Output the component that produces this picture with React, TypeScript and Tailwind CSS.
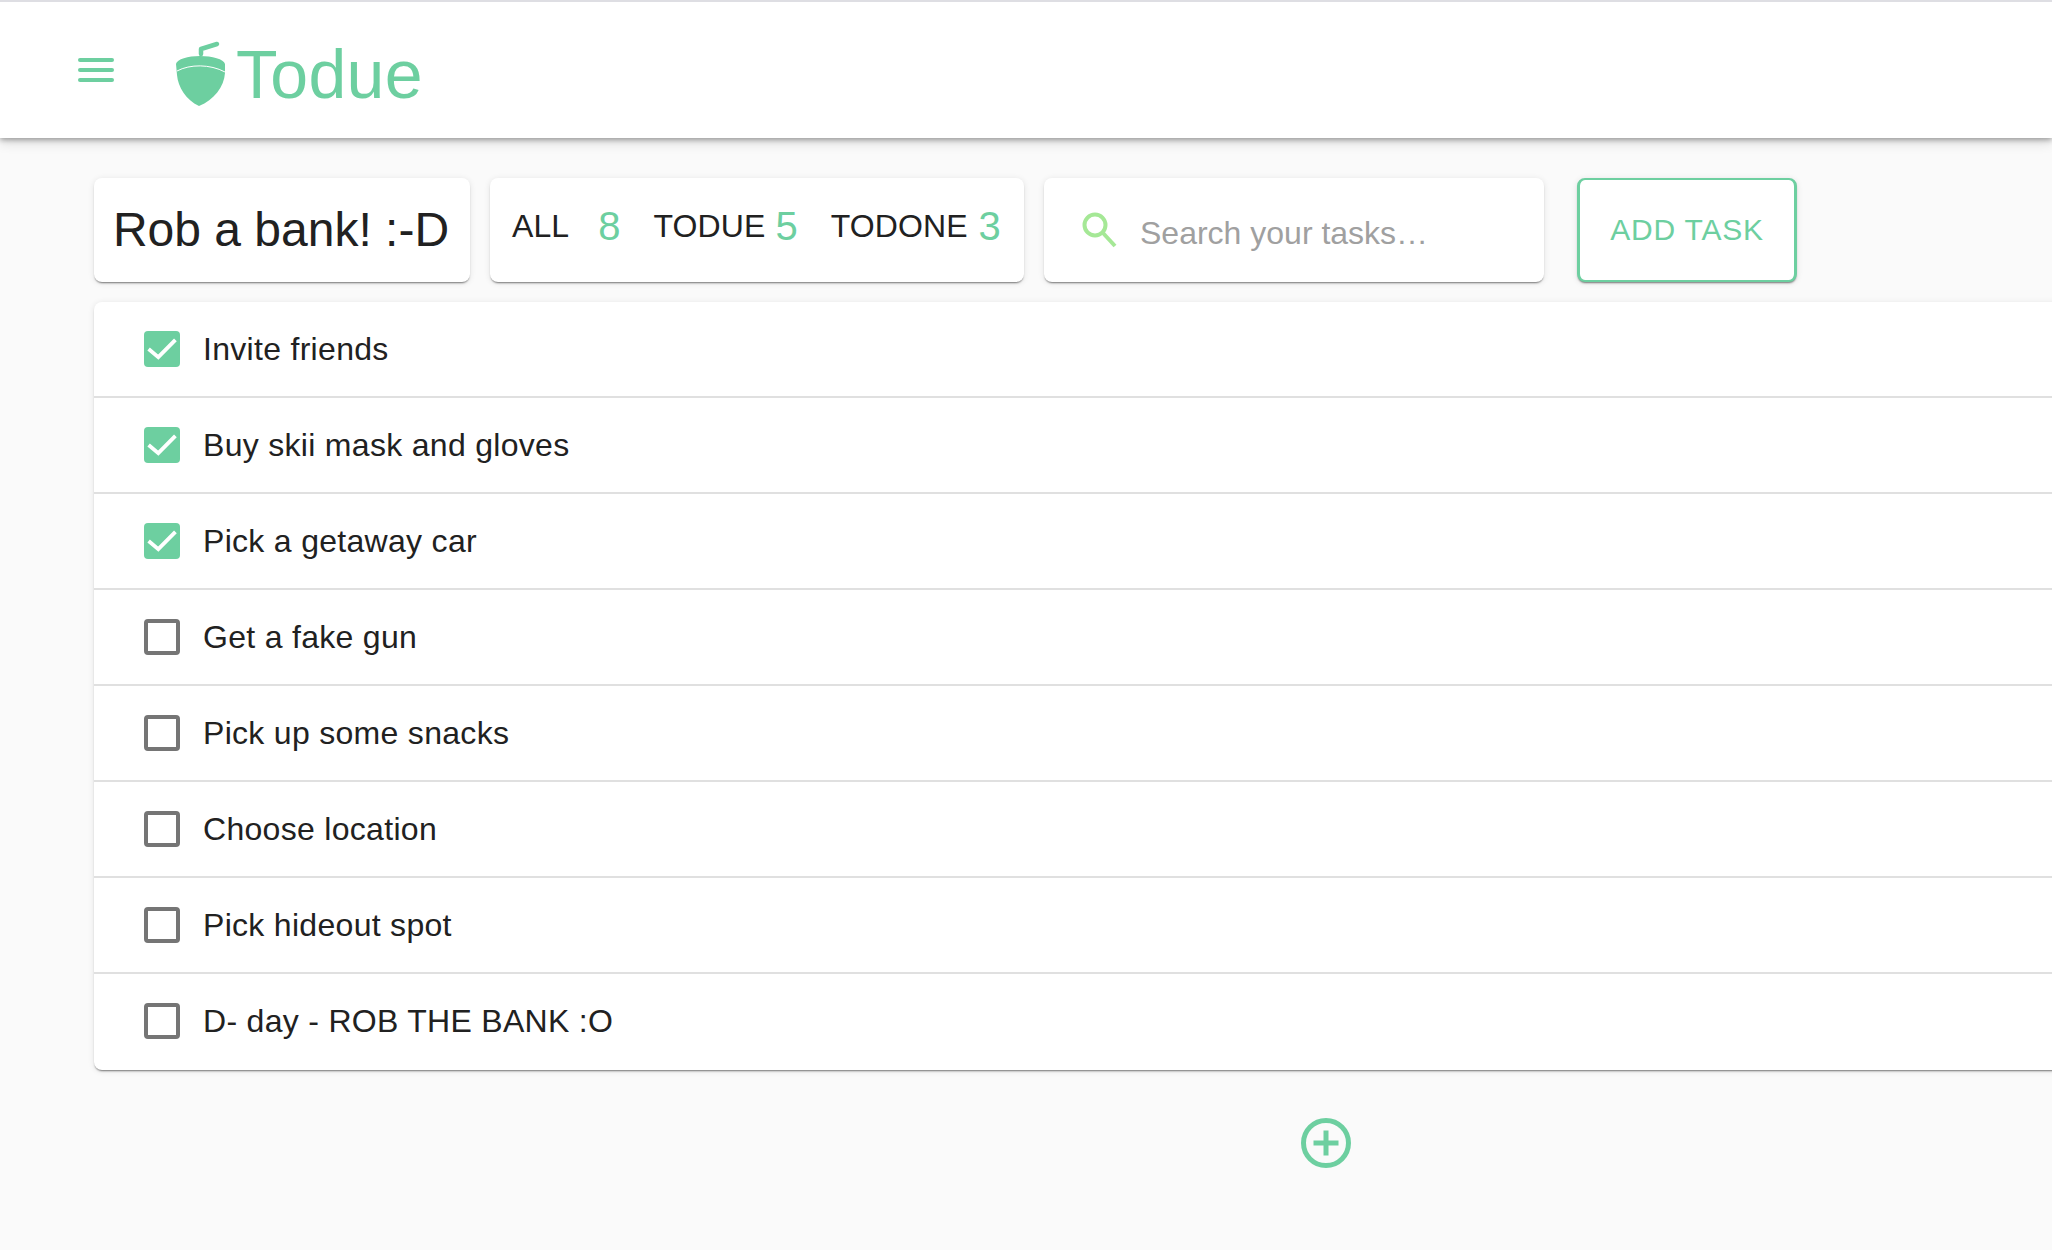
const tasks = [
  { title: 'Invite friends', done: true },
  { title: 'Buy skii mask and gloves', done: true },
  { title: 'Pick a getaway car', done: true },
  { title: 'Get a fake gun', done: false },
  { title: 'Pick up some snacks', done: false },
  { title: 'Choose location', done: false },
  { title: 'Pick hideout spot', done: false },
  { title: 'D- day - ROB THE BANK :O', done: false },
];

const cardShadow =
  'shadow-[0_2px_2px_-1px_rgba(0,0,0,0.5),0_1px_6px_rgba(0,0,0,0.1)]';

function Acorn() {
  return (
    <svg width="52" height="66" viewBox="14 10 52 66" className="shrink-0">
      <path d="M41 23 L41 18 L57 13" fill="none" stroke="#6dcfa0" strokeWidth="4.5" strokeLinejoin="round" strokeLinecap="round" />
      <path
        d="M16 33 C17 28 28 25 40 25 C52 25 64 28 65 33 L65 42 C64 56 54 69 39 75 C26 69 18 56 17 44 Z"
        fill="#6dcfa0"
      />
      <path d="M17 40 C30 33 50 33 65 41" fill="none" stroke="#ffffff" strokeWidth="1" />
    </svg>
  );
}

function Checkbox({ checked }: { checked: boolean }) {
  if (checked) {
    return (
      <span className="flex h-9 w-9 shrink-0 rounded-[4px] bg-[#6dcfa0]">
        <svg width="36" height="36" viewBox="0 0 36 36">
          <path d="M4.6 18 L14.3 26.2 L31.4 8.8" fill="none" stroke="#ffffff" strokeWidth="3.8" />
        </svg>
      </span>
    );
  }
  return <span className="h-9 w-9 shrink-0 rounded-[4px] border-4 border-[#757575] bg-white" />;
}

function Count({ label, value, className }: { label: string; value: number; className: string }) {
  return (
    <span className={`flex items-start ${className}`}>
      <span className="text-[32px] leading-10 tracking-[0.1px] text-[#212121]">{label}</span>
      <span className="text-[40px] leading-10 text-[#6dcfa0]">{value}</span>
    </span>
  );
}

export default function App() {
  return (
    <div className="h-[1250px] w-[2052px] overflow-hidden bg-[#fafafa] font-['Liberation_Sans',Arial,sans-serif] text-[#212121]">
      <header className="relative flex h-[138px] items-center border-t-2 border-[#dedee3] bg-white shadow-[0_2px_5px_rgba(0,0,0,0.3),0_4px_12px_rgba(0,0,0,0.14)]">
        <button className="ml-[78px] flex w-9 flex-col gap-1.5">
          <span className="h-1 rounded-full bg-[#6dcfa0]" />
          <span className="h-1 rounded-full bg-[#6dcfa0]" />
          <span className="h-1 rounded-full bg-[#6dcfa0]" />
        </button>
        <div className="ml-[60px] flex items-center pt-2">
          <Acorn />
          <span className="ml-[10px] text-[68px] leading-none tracking-[0.3px] text-[#6dcfa0]">Todue</span>
        </div>
      </header>

      <main className="pl-[94px]">
        <div className="mt-10 flex h-[104px] items-stretch">
          <div className={`flex w-[376px] items-center justify-center rounded-lg bg-white pr-[2px] text-[48px] ${cardShadow}`}>
            Rob a bank! :-D
          </div>
          <div className={`ml-5 flex w-[534px] items-start rounded-lg bg-white pl-[22px] pt-[28px] ${cardShadow}`}>
            <Count label="ALL" value={8} className="gap-[29px]" />
            <Count label="TODUE" value={5} className="ml-[33px] gap-[10px]" />
            <Count label="TODONE" value={3} className="ml-[33px] gap-[11px]" />
          </div>
          <div className={`ml-5 flex w-[500px] items-center rounded-lg bg-white pl-[38px] ${cardShadow}`}>
            <svg width="36" height="36" viewBox="0 0 36 36" className="shrink-0">
              <circle cx="13" cy="13" r="10.5" fill="none" stroke="#a5e896" strokeWidth="4" />
              <path d="M21 21 L33 34" fill="none" stroke="#a5e896" strokeWidth="4" />
            </svg>
            <span className="ml-[22px] mt-[6px] text-[32px] text-[#a0a0a0]">Search your tasks…</span>
          </div>
          <button className={`ml-[33px] w-[220px] rounded-lg border-x-[3px] border-y-2 border-[#6dcfa0] bg-white pb-[2px] text-[30px] tracking-[0.8px] text-[#6dcfa0] ${cardShadow}`}>
            ADD TASK
          </button>
        </div>

        <ul className={`mt-5 w-[2464px] rounded-l-lg bg-white ${cardShadow}`}>
          {tasks.map((task, i) => (
            <li
              key={task.title}
              className={`flex h-24 items-center border-b-2 pl-[50px] ${i < tasks.length - 1 ? 'border-[#e0e0e0]' : 'border-transparent'}`}
            >
              <Checkbox checked={task.done} />
              <span className="ml-[23px] text-[32px] tracking-[0.3px]">{task.title}</span>
            </li>
          ))}
        </ul>

        <div className="mt-[48px] flex w-[2464px] justify-center">
          <button>
            <svg width="50" height="50" viewBox="0 0 50 50">
              <circle cx="25" cy="25" r="22.5" fill="none" stroke="#6dcfa0" strokeWidth="5" />
              <path d="M12.5 25 H37.5 M25 12.5 V37.5" fill="none" stroke="#6dcfa0" strokeWidth="5" />
            </svg>
          </button>
        </div>
      </main>
    </div>
  );
}
